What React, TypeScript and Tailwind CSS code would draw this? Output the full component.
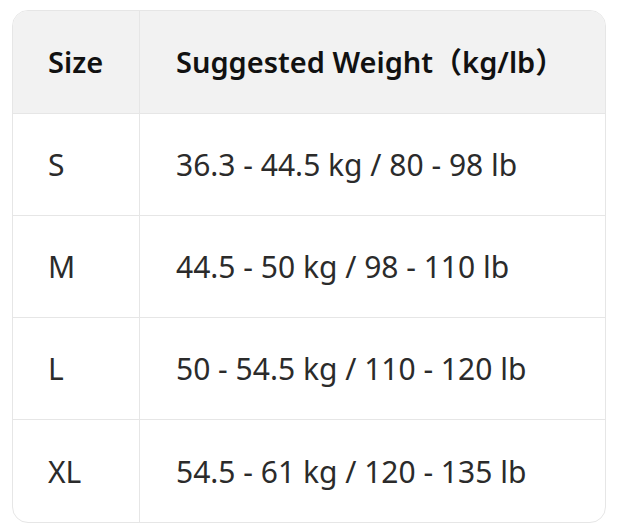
export default function App() {
  const rows = [
    { size: "S", weight: "36.3 - 44.5 kg / 80 - 98 lb" },
    { size: "M", weight: "44.5 - 50 kg / 98 - 110 lb" },
    { size: "L", weight: "50 - 54.5 kg / 110 - 120 lb" },
    { size: "XL", weight: "54.5 - 61 kg / 120 - 135 lb" },
  ];

  return (
    <div
      className="w-[627px] h-[527px] bg-white pt-[10px] pl-[12px]"
      style={{ fontFamily: '"Noto Sans", "Noto Sans CJK SC", sans-serif' }}
    >
      <div className="w-[594px] border border-[#e6e6e6] rounded-[16px] overflow-hidden">
        <div className="flex h-[103px] bg-[#f2f2f2] border-b border-[#e6e6e6] text-[29px] font-semibold text-[#111]">
          <div className="w-[127px] border-r border-[#e6e6e6] flex items-center pl-[35px]">Size</div>
          <div className="flex-1 flex items-center pl-[36px]">Suggested Weight（kg/lb）</div>
        </div>
        {rows.map((r, i) => (
          <div
            key={r.size}
            className={`flex h-[102px] text-[30px] text-[#2b2b2b] ${i < rows.length - 1 ? "border-b border-[#e6e6e6]" : ""}`}
          >
            <div className="w-[127px] border-r border-[#e6e6e6] flex items-center pl-[35px]">{r.size}</div>
            <div className="flex-1 flex items-center pl-[36px]">{r.weight}</div>
          </div>
        ))}
      </div>
    </div>
  );
}
